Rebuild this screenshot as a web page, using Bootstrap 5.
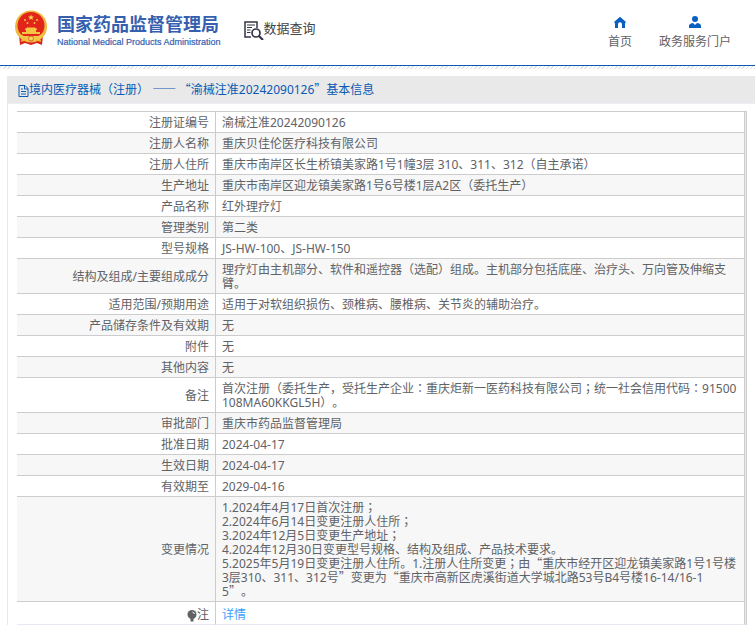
<!DOCTYPE html>
<html lang="zh-CN">
<head>
<meta charset="utf-8">
<meta name="viewport" content="width=device-width, initial-scale=1">
<title>国家药品监督管理局 数据查询</title>
<link href="https://cdn.jsdelivr.net/npm/bootstrap@5.3.0/dist/css/bootstrap.min.css" rel="stylesheet">
<style>
body { font-family: "Noto Sans", "Noto Sans CJK SC", sans-serif; font-size: 12px; line-height: 14px; color: #606266; text-spacing-trim: space-all; }
.site-head { height: 66px; border-bottom: 1px solid #0a5ab4; padding: 10px 24px 0 14px; }
.hatch { height: 3px; background: repeating-linear-gradient(135deg, #fff 0 1px, #e2e2e2 1px 2px, #fff 2px 3px); }
.brand { color: #365fb0; gap: 9px; }
.brand-cn { font: 700 18px/26px "Noto Sans CJK SC", sans-serif; }
.brand-en { font: 400 9px/12px "Liberation Sans", sans-serif; -webkit-text-stroke: 0.2px #365fb0; }
.query { font: 13px/20px "Noto Sans CJK SC", sans-serif; color: #444; padding-top: 8px; margin-left: 22px; }
.top-nav { gap: 27px; padding-top: 6px; }
.top-nav a { color: #606266; line-height: 20px; }
.panel { margin: 7px 0 0 7px; border-left: 1px solid #e9e9ef; }
.panel-title { margin: 0 0 0 -1px; height: 28px; padding: 2px 0 0 11px; background: #e9e9e9; border-bottom: 1px solid #ebeef5; font-size: 12px; font-weight: 400; color: #0a5ab4; }
.sheet { margin: 7px 8px 8px 9px; border-top: 1px solid #ccc; border-right: 1px solid #ccc; padding-right: 1px; background: #ebebef; }
.sheet table { border-collapse: separate; border-spacing: 0; background: #fff; }
.sheet th, .sheet td { border: 0 solid #ccc; border-width: 0 1px 1px 0; padding: 4px 6px 2px; vertical-align: middle; font-weight: 400; word-break: break-all; }
.sheet th { width: 199px; text-align: right; }
.sheet tr:nth-child(even) > * { background: #f7f7f7; }
.sheet tr:last-child > * { border-bottom-color: #e6e9f2; padding-top: 6px; padding-bottom: 2px; }
.sheet a { color: #409eff; }
.zq { font-family: "Noto Sans CJK SC", sans-serif; line-height: 1; }
.zm { font-family: "Noto Sans CJK TC", sans-serif; line-height: 1; }
</style>
<script src="https://cdn.jsdelivr.net/npm/bootstrap@5.3.0/dist/js/bootstrap.bundle.min.js"></script>
</head>
<body>
<header class="site-head d-flex align-items-start">
  <div class="brand d-flex">
    <svg width="34" height="37" viewBox="0 0 34 37" aria-hidden="true">
      <path d="M5 25h24l-1 10-5-2-6 2-6-2-5 2z" fill="#d9231c"/>
      <circle cx="17" cy="16.500" r="16" fill="#eeb83d"/>
      <circle cx="17" cy="15.500" r="13.500" fill="#e1251b"/>
      <path d="M17 4.500l.8 2h2.200l-1.700 1.400.6 2.200-1.900-1.300-1.900 1.300.6-2.200L14 6.500h2.200z" fill="#f8d44c"/>
      <g fill="#f5c443"><circle cx="11" cy="10" r="1"/><circle cx="23" cy="10" r="1"/><circle cx="13.500" cy="13" r="1"/><circle cx="20.500" cy="13" r="1"/>
      <path d="M11 19l2-1.500h8l2 1.500v1h-1V22h4v2H8v-2h4v-2h-1z"/></g>
      <path d="M4 23l6 3h14l6-3-4 7-6 1-3-2-3 2-6-1z" fill="#f3c648"/>
      <path d="M7 31l5-1M27 31l-5-1" stroke="#f0b52f" stroke-width="1.500"/>
      <circle cx="17" cy="28.500" r="2.500" fill="#f5d65d" stroke="#cf3c1d" stroke-width=".7"/>
    </svg>
    <div class="text-nowrap">
      <div class="brand-cn">国家药品监督管理局</div>
      <div class="brand-en">National Medical Products Administration</div>
    </div>
  </div>
  <div class="query d-flex text-nowrap">
    <svg width="21" height="22" viewBox="0 0 21 22" fill="none" stroke="#34344a" aria-hidden="true">
      <path d="M8 19H2V4h12v6" stroke-width="1.500"/>
      <path d="M4 7h8M4 9.500h5M4 12h3.500M4 14.500h3.500" stroke-width="1"/>
      <circle cx="13" cy="15" r="4" stroke-width="1.700"/>
      <path d="M16 18l4 4" stroke-width="2.200"/>
    </svg>
    <span>数据查询</span>
  </div>
  <nav class="top-nav d-flex ms-auto text-center text-nowrap">
    <a href="#" class="text-decoration-none d-flex flex-column align-items-center">
      <svg class="mb-1" width="12" height="12" viewBox="0 0 12 12" fill="#0a5fc2" aria-hidden="true"><path d="M6 .8l6 5.200-.8 1H11v5H8V8.200a2 2 0 0 0-4 0V12H1V7H.800L0 6z"/></svg>
      首页</a>
    <a href="#" class="text-decoration-none d-flex flex-column align-items-center">
      <svg class="mb-1" width="12" height="12" viewBox="0 0 12 12" fill="#0a5fc2" aria-hidden="true"><circle cx="6" cy="3" r="3"/><path d="M0 12V9.500Q.5 7.500 4 7l2 2 2-2q3.500.5 4 2.500V12z"/></svg>
      政务服务门户</a>
  </nav>
</header>
<div class="hatch"></div>
<main class="panel">
  <h1 class="panel-title d-flex align-items-center">
    <svg width="11" height="12" viewBox="0 0 11 12" fill="none" stroke="#0a5ab4" aria-hidden="true"><path d="M1 .5h6l3 3v8H1zM6.500.5V4H10M3 4h2M3 6.500h5M3 9h5"/></svg>
    <span>境内医疗器械（注册） <span class="zq">—— “</span>渝械注准20242090126<span class="zq">”</span>基本信息</span>
  </h1>
  <div class="sheet">
    <table class="w-100">
      <tbody>
        <tr><th scope="row">注册证编号</th><td>渝械注准20242090126</td></tr>
        <tr><th scope="row">注册人名称</th><td>重庆贝佳伦医疗科技有限公司</td></tr>
        <tr><th scope="row">注册人住所</th><td>重庆市南岸区长生桥镇美家路1号1幢3层 310、311、312（自主承诺）</td></tr>
        <tr><th scope="row">生产地址</th><td>重庆市南岸区迎龙镇美家路1号6号楼1层A2区（委托生产）</td></tr>
        <tr><th scope="row">产品名称</th><td>红外理疗灯</td></tr>
        <tr><th scope="row">管理类别</th><td>第二类</td></tr>
        <tr><th scope="row">型号规格</th><td>JS-HW-100、JS-HW-150</td></tr>
        <tr><th scope="row">结构及组成/主要组成成分</th><td>理疗灯由主机部分、软件和遥控器（选配）组成。主机部分包括底座、治疗头、万向管及伸缩支臂。</td></tr>
        <tr><th scope="row">适用范围/预期用途</th><td>适用于对软组织损伤、颈椎病、腰椎病、关节炎的辅助治疗。</td></tr>
        <tr><th scope="row">产品储存条件及有效期</th><td>无</td></tr>
        <tr><th scope="row">附件</th><td>无</td></tr>
        <tr><th scope="row">其他内容</th><td>无</td></tr>
        <tr><th scope="row">备注</th><td>首次注册（委托生产，受托生产企业<span class="zm" lang="zh-TW">：</span>重庆炬新一医药科技有限公司<span class="zm" lang="zh-TW">；</span>统一社会信用代码<span class="zm" lang="zh-TW">：</span>91500108MA60KKGL5H）。</td></tr>
        <tr><th scope="row">审批部门</th><td>重庆市药品监督管理局</td></tr>
        <tr><th scope="row">批准日期</th><td>2024-04-17</td></tr>
        <tr><th scope="row">生效日期</th><td>2024-04-17</td></tr>
        <tr><th scope="row">有效期至</th><td>2029-04-16</td></tr>
        <tr><th scope="row">变更情况</th><td>1.2024年4月17日首次注册<span class="zm" lang="zh-TW">；</span><br>2.2024年6月14日变更注册人住所<span class="zm" lang="zh-TW">；</span><br>3.2024年12月5日变更生产地址<span class="zm" lang="zh-TW">；</span><br>4.2024年12月30日变更型号规格、结构及组成、产品技术要求。<br>5.2025年5月19日变更注册人住所。1.注册人住所变更<span class="zm" lang="zh-TW">；</span>由<span class="zq">“</span>重庆市经开区迎龙镇美家路1号1号楼3层310、311、312号<span class="zq">”</span>变更为<span class="zq">“</span>重庆市高新区虎溪街道大学城北路53号B4号楼16-14/16-1<br>5<span class="zq">”</span>。</td></tr>
        <tr><th scope="row"><svg width="10" height="12" viewBox="0 0 10 12" aria-hidden="true"><circle cx="5" cy="4.500" r="4.500" fill="#606266"/><path d="M3.500 8h3v3.500h-3z" fill="#606266"/><path d="M5.500 2q1.500.3 2 2" fill="none" stroke="#fff"/></svg>注</th><td><a href="#" class="text-decoration-none">详情</a></td></tr>
      </tbody>
    </table>
  </div>
</main>
</body>
</html>
